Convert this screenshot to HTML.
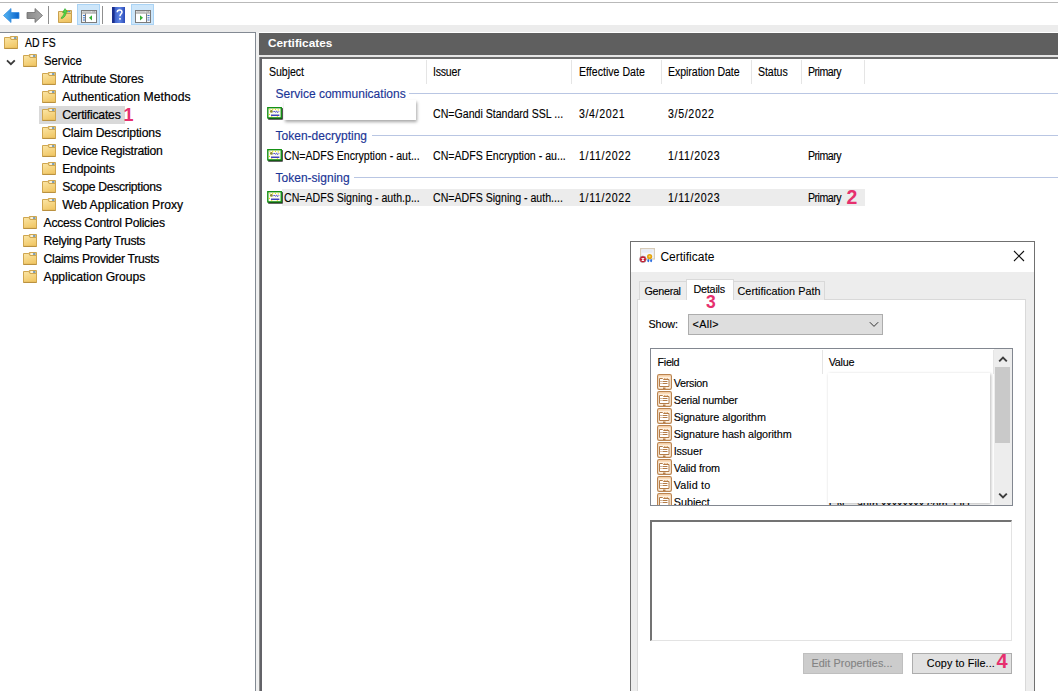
<!DOCTYPE html>
<html><head><meta charset="utf-8">
<style>
*{margin:0;padding:0;box-sizing:border-box}
html,body{width:1058px;height:691px;overflow:hidden;background:#fff;font-family:"Liberation Sans",sans-serif;color:#000}
.a{position:absolute}
.t{position:absolute;white-space:nowrap;line-height:1}
.tree{font-size:12.2px;color:#000;-webkit-text-stroke:.2px #000}
.lv{font-size:12px;color:#000;-webkit-text-stroke:.12px #000;transform:scaleX(.883);transform-origin:0 0}
.grp{font-size:12px;color:#1b3596;-webkit-text-stroke:.15px #1b3596}
.pink{color:#e6306e;font-weight:bold}
.fld{position:absolute;width:14px;height:13px}
.dlg{font-size:10.8px;-webkit-text-stroke:.12px currentColor}
</style></head><body>
<svg width="0" height="0" style="position:absolute">
<defs>
<symbol id="folder" viewBox="0 0 14 13">
 <linearGradient id="fg" x1="0" y1="0" x2=".4" y2="1"><stop offset="0" stop-color="#fbe6a6"/><stop offset="1" stop-color="#f1c868"/></linearGradient>
 <path d="M6.3 .5h7.2v4h-7.2z" fill="#efd184" stroke="#cfa650"/>
 <rect x="7.6" y="1.3" width="2.4" height="1.4" fill="#fff"/><ellipse cx="11.2" cy="2" rx="1.4" ry=".8" fill="#3f88d8"/>
 <path d="M.5 1.5h5.3l1.2 2h6.5v9h-13z" fill="url(#fg)" stroke="#cfa650"/>
 <path d="M.5 12.4h13" stroke="#b48c3c" stroke-width=".9"/>
</symbol>
<symbol id="cert" viewBox="0 0 17 14">
 <rect x="1.2" y="1.2" width="15.6" height="12.4" fill="#111"/>
 <rect x=".75" y=".75" width="14.5" height="11" fill="#fdfdf0" stroke="#169116" stroke-width="1.5"/>
 <circle cx="3" cy="2.8" r=".6" fill="#e8e000"/><circle cx="6" cy="2.6" r=".6" fill="#e8e000"/><circle cx="9" cy="2.6" r=".6" fill="#e8e000"/><circle cx="12" cy="3.2" r=".7" fill="#e8e000"/>
 <circle cx="2.6" cy="8" r=".6" fill="#e8e000"/><circle cx="5" cy="10.3" r=".6" fill="#e8e000"/><circle cx="11" cy="10.3" r=".6" fill="#e8e000"/>
 <circle cx="4.6" cy="4.8" r="1.5" fill="#8c8c30"/>
 <path d="M6.6 5.6l1.2-1.2 1.3 1.3 1.2-1.1 1.3 1.3 1.2-1.2" stroke="#2424c0" stroke-width="1" fill="none"/>
 <rect x="4.2" y="8.2" width="9" height="1.3" fill="#1a1ab4"/>
</symbol>
<symbol id="fieldico" viewBox="0 0 15 16">
 <rect x=".6" y=".6" width="13.8" height="14.8" rx="1.6" fill="#fdf0e0" stroke="#bb8450" stroke-width="1.2"/>
 <rect x="1.5" y="1.5" width="12" height="1" fill="#f9c894"/>
 <path d="M2.5 4.5h3l1 1h5.5v7h-9.5z" fill="#fff" stroke="#b47c48" stroke-width="1"/>
 <rect x="7" y="4" width="1.5" height="1" fill="#e0b080"/><rect x="9.5" y="4" width="1.5" height="1" fill="#e0b080"/>
 <rect x="3.5" y="7" width="1" height="1" fill="#a06a3a"/><rect x="3.5" y="9" width="1" height="1" fill="#c08858"/>
 <path d="M5.5 7.5h5M5.5 9.5h5" stroke="#b47c48" stroke-width="1"/>
 <rect x="6" y="13.5" width="2.5" height="1.5" fill="#b47c48"/>
</symbol>
</defs>
</svg>

<!-- ========== toolbar ========== -->
<div class="a" style="left:0;top:2px;width:1058px;height:1px;background:#b9b9b9"></div>
<div class="a" style="left:0;top:25px;width:1058px;height:7px;background:#ececec"></div>
<!-- back arrow -->
<svg class="a" style="left:3px;top:8px" width="17" height="15" viewBox="0 0 17 15">
 <defs><linearGradient id="gb" x1="0" y1="0" x2="1" y2="0"><stop offset="0" stop-color="#55b8f5"/><stop offset="1" stop-color="#0a62c9"/></linearGradient></defs>
 <path d="M.5 7.5L8 .5v4h8v6H8v4z" fill="url(#gb)" stroke="#3a8fe0" stroke-width=".8" stroke-linejoin="round"/>
</svg>
<!-- forward arrow -->
<svg class="a" style="left:26px;top:8px" width="17" height="15" viewBox="0 0 17 15">
 <defs><linearGradient id="gg" x1="0" y1="0" x2="1" y2="0"><stop offset="0" stop-color="#8a8a8a"/><stop offset="1" stop-color="#a8a8a8"/></linearGradient></defs>
 <path d="M16.5 7.5L9 .5v4H1v6h8v4z" fill="url(#gg)" stroke="#6d6d6d" stroke-width=".8" stroke-linejoin="round"/>
</svg>
<div class="a" style="left:48px;top:6px;width:1px;height:18px;background:#8f8f8f"></div>
<!-- up folder -->
<svg class="a" style="left:58px;top:8px" width="14" height="15" viewBox="0 0 14 15">
 <linearGradient id="ufg" x1="0" y1="0" x2=".3" y2="1"><stop offset="0" stop-color="#fbe3a0"/><stop offset="1" stop-color="#efc463"/></linearGradient>
 <path d="M6 2.5h7.5v3h-7.5z" fill="#efd184" stroke="#c9a04e"/>
 <ellipse cx="11.2" cy="3.6" rx="1.3" ry=".7" fill="#3f88d8"/>
 <path d="M.5 3.5h5.5l1 2h6.5v9h-13z" fill="url(#ufg)" stroke="#c9a04e"/>
 <path d="M3 10.2C4.2 8.2 6 7.2 6.2 4.4L4.6 4.6 7 .6 9.6 4 8.2 4C8.2 7 6.6 9.2 4 10.6z" fill="#55d648" stroke="#2ea12a" stroke-width=".6" stroke-linejoin="round"/>
</svg>
<!-- btn1 -->
<div class="a" style="left:77px;top:4px;width:23px;height:21px;background:#cde6fa;border:1px solid #a9d3f5"></div>
<svg class="a" style="left:81px;top:10px" width="16" height="13" viewBox="0 0 16 13">
 <rect x=".5" y=".5" width="15" height="12" fill="#f2f2f2" stroke="#7b7b7b"/>
 <rect x="1.5" y="1.3" width="9" height="1" fill="#bcbcbc"/>
 <rect x="11.5" y="1.2" width="1" height="1.2" fill="#7b7b7b"/><rect x="13.3" y="1.2" width="1" height="1.2" fill="#7b7b7b"/>
 <path d="M1 3h14" stroke="#8a8a8a" stroke-width=".8"/>
 <path d="M4.5 3.5v9" stroke="#7b7b7b"/>
 <rect x="5" y="4" width="10" height="8" fill="#fff"/>
 <path d="M2 5.5h2M2 7.8h2M2 10h2" stroke="#3b78d4" stroke-width="1"/>
 <path d="M11 5.2v5.3L8 7.85z" fill="#33b033"/>
</svg>
<div class="a" style="left:102px;top:6px;width:1px;height:18px;background:#8f8f8f"></div>
<!-- help -->
<svg class="a" style="left:112px;top:7px" width="13" height="16" viewBox="0 0 13 16">
 <defs><linearGradient id="hg" x1="0" y1="0" x2="1" y2="0"><stop offset="0" stop-color="#2a4cbc"/><stop offset=".6" stop-color="#5d83e2"/><stop offset="1" stop-color="#2a4ab8"/></linearGradient></defs>
 <rect x="0" y="0" width="13" height="16" fill="url(#hg)"/>
 <rect x="0" y="0" width="2.6" height="16" fill="#1b2f8e"/>
 <path d="M5.2 5.3C5.2 3.6 6.2 3 7.6 3S10 3.8 10 5.2 8 7.2 8 9.2" fill="none" stroke="#fff" stroke-width="1.5"/>
 <rect x="7.2" y="11" width="1.6" height="1.7" fill="#fff"/>
</svg>
<!-- btn2 -->
<div class="a" style="left:131px;top:4px;width:23px;height:21px;background:#cde6fa;border:1px solid #a9d3f5"></div>
<svg class="a" style="left:135px;top:10px" width="16" height="13" viewBox="0 0 16 13">
 <rect x=".5" y=".5" width="15" height="12" fill="#f2f2f2" stroke="#7b7b7b"/>
 <rect x="1.5" y="1.3" width="9" height="1" fill="#bcbcbc"/>
 <rect x="11.5" y="1.2" width="1" height="1.2" fill="#7b7b7b"/><rect x="13.3" y="1.2" width="1" height="1.2" fill="#7b7b7b"/>
 <path d="M1 3h14" stroke="#8a8a8a" stroke-width=".8"/>
 <path d="M11.5 3.5v9" stroke="#7b7b7b"/>
 <rect x="1" y="4" width="10" height="8" fill="#fff"/>
 <path d="M12.5 5.5h2M12.5 7.8h2M12.5 10h2" stroke="#3b78d4" stroke-width="1"/>
 <path d="M5 5.2v5.3L8 7.85z" fill="#33b033"/>
</svg>

<!-- ========== left pane ========== -->
<div class="a" style="left:0;top:32px;width:256px;height:1px;background:#838a93"></div>
<div class="a" style="left:255px;top:32px;width:1px;height:659px;background:#838a93"></div>
<div class="a" style="left:256px;top:32px;width:3px;height:659px;background:#f0f0f0"></div>

<svg class="fld" style="left:4px;top:36px"><use href="#folder"/></svg>
<div class="t tree" style="left:24.5px;top:37px;transform:scaleX(.855);transform-origin:0 0">AD FS</div>
<svg class="a" style="left:6px;top:59px" width="10" height="7" viewBox="0 0 10 7"><path d="M1 1.3l3.9 3.9L8.8 1.3" fill="none" stroke="#3a3a3a" stroke-width="1.8"/></svg>
<svg class="fld" style="left:23px;top:54px"><use href="#folder"/></svg>
<div class="t tree" style="left:43.6px;top:55px;transform:scaleX(.93);transform-origin:0 0">Service</div>

<svg class="fld" style="left:42px;top:72px"><use href="#folder"/></svg>
<div class="t tree" style="left:62.2px;top:73px;letter-spacing:-0.165px">Attribute Stores</div>
<svg class="fld" style="left:42px;top:90px"><use href="#folder"/></svg>
<div class="t tree" style="left:62.2px;top:91px;letter-spacing:0.05px">Authentication Methods</div>
<div class="a" style="left:39px;top:106px;width:86px;height:18px;background:#d9d9d9"></div>
<svg class="fld" style="left:42px;top:108px"><use href="#folder"/></svg>
<div class="t tree" style="left:62.2px;top:109px;letter-spacing:-0.22px">Certificates</div>
<div class="t pink" style="left:123.5px;top:106px;font-size:18px">1</div>
<svg class="fld" style="left:42px;top:126px"><use href="#folder"/></svg>
<div class="t tree" style="left:62.2px;top:127px;letter-spacing:-0.164px">Claim Descriptions</div>
<svg class="fld" style="left:42px;top:144px"><use href="#folder"/></svg>
<div class="t tree" style="left:62.2px;top:145px;letter-spacing:-0.288px">Device Registration</div>
<svg class="fld" style="left:42px;top:162px"><use href="#folder"/></svg>
<div class="t tree" style="left:62.2px;top:163px;letter-spacing:-0.195px">Endpoints</div>
<svg class="fld" style="left:42px;top:180px"><use href="#folder"/></svg>
<div class="t tree" style="left:62.2px;top:181px;letter-spacing:-0.318px">Scope Descriptions</div>
<svg class="fld" style="left:42px;top:198px"><use href="#folder"/></svg>
<div class="t tree" style="left:62.2px;top:199px;letter-spacing:-0.042px">Web Application Proxy</div>
<svg class="fld" style="left:23px;top:216px"><use href="#folder"/></svg>
<div class="t tree" style="left:43.6px;top:217px;letter-spacing:-0.271px">Access Control Policies</div>
<svg class="fld" style="left:23px;top:234px"><use href="#folder"/></svg>
<div class="t tree" style="left:43.6px;top:235px;letter-spacing:-0.387px">Relying Party Trusts</div>
<svg class="fld" style="left:23px;top:252px"><use href="#folder"/></svg>
<div class="t tree" style="left:43.6px;top:253px;letter-spacing:-0.324px">Claims Provider Trusts</div>
<svg class="fld" style="left:23px;top:270px"><use href="#folder"/></svg>
<div class="t tree" style="left:43.6px;top:271px;letter-spacing:-0.075px">Application Groups</div>

<!-- ========== right pane ========== -->
<div class="a" style="left:259px;top:33px;width:799px;height:22px;background:#5f5f5f"></div>
<div class="a" style="left:259px;top:55px;width:799px;height:2px;background:#e6e6e6"></div>
<div class="a" style="left:259px;top:57px;width:799px;height:2px;background:#6d6d6d"></div>
<div class="a" style="left:259px;top:57px;width:3px;height:634px;background:#636368;border-left:1px solid #8e8e8e"></div>
<div class="t" style="left:268px;top:38px;font-size:11.8px;font-weight:bold;color:#fff">Certificates</div>

<!-- column headers -->
<div class="t lv" style="left:269.4px;top:66px;letter-spacing:-0.068px">Subject</div>
<div class="t lv" style="left:433.2px;top:66px;letter-spacing:-0.260px">Issuer</div>
<div class="t lv" style="left:578.8px;top:66px">Effective Date</div>
<div class="t lv" style="left:668px;top:66px;letter-spacing:-0.068px">Expiration Date</div>
<div class="t lv" style="left:757.9px;top:66px;letter-spacing:-0.079px">Status</div>
<div class="t lv" style="left:807.8px;top:66px;letter-spacing:-0.555px">Primary</div>
<div class="a" style="left:426px;top:60px;width:1px;height:24px;background:#e5e5e5"></div>
<div class="a" style="left:571px;top:60px;width:1px;height:24px;background:#e5e5e5"></div>
<div class="a" style="left:661px;top:60px;width:1px;height:24px;background:#e5e5e5"></div>
<div class="a" style="left:751px;top:60px;width:1px;height:24px;background:#e5e5e5"></div>
<div class="a" style="left:801px;top:60px;width:1px;height:24px;background:#e5e5e5"></div>
<div class="a" style="left:864px;top:60px;width:1px;height:24px;background:#e5e5e5"></div>

<!-- group 1 -->
<div class="t grp" style="left:275.6px;top:88px">Service communications</div>
<div class="a" style="left:409px;top:93px;width:649px;height:1px;background:#b9c6e3"></div>
<svg class="a" style="left:267px;top:107px" width="16" height="13"><use href="#cert"/></svg>
<div class="a" style="left:284px;top:100px;width:132px;height:20px;background:#fff;box-shadow:1px 2px 3px rgba(0,0,0,.35)"></div>
<div class="t lv" style="left:432.6px;top:108px">CN=Gandi Standard SSL ...</div>
<div class="t lv" style="left:578.8px;top:108px;letter-spacing:0.702px">3/4/2021</div>
<div class="t lv" style="left:668px;top:108px;letter-spacing:0.759px">3/5/2022</div>

<!-- group 2 -->
<div class="t grp" style="left:275.6px;top:130px">Token-decrypting</div>
<div class="a" style="left:372px;top:135px;width:686px;height:1px;background:#b9c6e3"></div>
<svg class="a" style="left:267px;top:149px" width="16" height="13"><use href="#cert"/></svg>
<div class="t lv" style="left:284.4px;top:150px">CN=ADFS Encryption - aut...</div>
<div class="t lv" style="left:433px;top:150px">CN=ADFS Encryption - au...</div>
<div class="t lv" style="left:578.8px;top:150px;letter-spacing:0.759px">1/11/2022</div>
<div class="t lv" style="left:668px;top:150px;letter-spacing:0.759px">1/11/2023</div>
<div class="t lv" style="left:808px;top:150px;letter-spacing:-0.555px">Primary</div>

<!-- group 3 -->
<div class="t grp" style="left:275.6px;top:172px">Token-signing</div>
<div class="a" style="left:354px;top:177px;width:704px;height:1px;background:#b9c6e3"></div>
<div class="a" style="left:282px;top:189px;width:583px;height:17px;background:#ececec"></div>
<svg class="a" style="left:267px;top:191px" width="16" height="13"><use href="#cert"/></svg>
<div class="t lv" style="left:284.4px;top:192px">CN=ADFS Signing - auth.p...</div>
<div class="t lv" style="left:433px;top:192px">CN=ADFS Signing - auth....</div>
<div class="t lv" style="left:578.8px;top:192px;letter-spacing:0.759px">1/11/2022</div>
<div class="t lv" style="left:668px;top:192px;letter-spacing:0.759px">1/11/2023</div>
<div class="t lv" style="left:808px;top:192px;letter-spacing:-0.555px">Primary</div>
<div class="t pink" style="left:846.5px;top:187.5px;font-size:19.5px">2</div>

<!-- ========== dialog ========== -->
<div class="a" style="left:630px;top:241px;width:405px;height:460px;background:#ededed;border:1px solid #707070"></div>
<div class="a" style="left:631px;top:242px;width:403px;height:30px;background:#fff"></div>
<svg class="a" style="left:639px;top:248px" width="16" height="16" viewBox="0 0 16 16">
 <rect x="1.6" y=".6" width="13.8" height="10.4" fill="#f3f5fb" stroke="#d8ccb8" stroke-width="1.2"/>
 <rect x="2.6" y="1.8" width="11" height="3" fill="#e6eaf4"/>
 <ellipse cx="9.3" cy="12.6" rx="1" ry="1.7" fill="#2f6fe0"/><ellipse cx="12.1" cy="12.6" rx="1" ry="1.7" fill="#2f6fe0"/>
 <circle cx="10.6" cy="8.6" r="2.6" fill="#e4a30c"/><circle cx="10.6" cy="8.6" r="1" fill="#fad468"/>
 <circle cx="3.9" cy="11.3" r="3.3" fill="#c8142c" stroke="#a0a0a0" stroke-width=".6"/>
 <path d="M2.7 10.1l2.4 2.4M5.1 10.1l-2.4 2.4" stroke="#fff" stroke-width="1.1"/>
</svg>
<div class="t" style="left:660.4px;top:251px;font-size:12px">Certificate</div>
<svg class="a" style="left:1013px;top:250px" width="12" height="12" viewBox="0 0 12 12"><path d="M1 1l10 10M11 1L1 11" stroke="#111" stroke-width="1.1"/></svg>

<!-- tabs -->
<div class="a" style="left:637px;top:299px;width:389px;height:400px;background:#fff;border:1px solid #d9d9d9"></div>
<div class="a" style="left:639px;top:281px;width:48px;height:19px;background:#ededed;border:1px solid #d9d9d9;border-bottom:none"></div>
<div class="a" style="left:733px;top:281px;width:92px;height:19px;background:#ededed;border:1px solid #d9d9d9;border-bottom:none"></div>
<div class="a" style="left:686px;top:279px;width:48px;height:21px;background:#fff;border:1px solid #d9d9d9;border-bottom:none"></div>
<div class="t dlg" style="left:644.5px;top:286px;letter-spacing:-0.32px">General</div>
<div class="t dlg" style="left:693.4px;top:284px;letter-spacing:-0.2px">Details</div>
<div class="t dlg" style="left:737.5px;top:286px;letter-spacing:0.045px">Certification Path</div>
<div class="t pink" style="left:706px;top:293.5px;font-size:17.5px">3</div>

<div class="t dlg" style="left:648.5px;top:319px;letter-spacing:-0.13px">Show:</div>
<div class="a" style="left:688px;top:314px;width:195px;height:21px;background:#dedede;border:1px solid #adadad"></div>
<div class="t dlg" style="left:692.5px;top:319px;letter-spacing:0.37px">&lt;All&gt;</div>
<svg class="a" style="left:869px;top:321px" width="10" height="7" viewBox="0 0 10 7"><path d="M.8 1.2L5 5.4l4.2-4.2" fill="none" stroke="#333" stroke-width="1"/></svg>

<!-- listview -->
<div class="a" style="left:650px;top:348px;width:363px;height:158px;background:#fff;border:1px solid #828790;overflow:hidden">
 <div class="t dlg" style="left:6.6px;top:8px;letter-spacing:-0.35px">Field</div>
 <div class="t dlg" style="left:177.7px;top:8px;letter-spacing:-0.25px">Value</div>
 <div class="a" style="left:171px;top:1px;width:1px;height:24px;background:#e5e5e5"></div>
 <svg class="a" style="left:6px;top:25px" width="15" height="16"><use href="#fieldico"/></svg>
 <div class="t dlg" style="left:22.7px;top:29px;letter-spacing:-0.29px">Version</div>
 <svg class="a" style="left:6px;top:42px" width="15" height="16"><use href="#fieldico"/></svg>
 <div class="t dlg" style="left:22.7px;top:46px;letter-spacing:-0.25px">Serial number</div>
 <svg class="a" style="left:6px;top:59px" width="15" height="16"><use href="#fieldico"/></svg>
 <div class="t dlg" style="left:22.7px;top:63px;letter-spacing:-0.075px">Signature algorithm</div>
 <svg class="a" style="left:6px;top:76px" width="15" height="16"><use href="#fieldico"/></svg>
 <div class="t dlg" style="left:22.7px;top:80px;letter-spacing:-0.09px">Signature hash algorithm</div>
 <svg class="a" style="left:6px;top:93px" width="15" height="16"><use href="#fieldico"/></svg>
 <div class="t dlg" style="left:22.7px;top:97px;letter-spacing:-0.12px">Issuer</div>
 <svg class="a" style="left:6px;top:110px" width="15" height="16"><use href="#fieldico"/></svg>
 <div class="t dlg" style="left:22.7px;top:114px;letter-spacing:-0.157px">Valid from</div>
 <svg class="a" style="left:6px;top:127px" width="15" height="16"><use href="#fieldico"/></svg>
 <div class="t dlg" style="left:22.7px;top:131px;letter-spacing:0.2px">Valid to</div>
 <svg class="a" style="left:6px;top:144px" width="15" height="16"><use href="#fieldico"/></svg>
 <div class="t dlg" style="left:22.7px;top:148px">Subject</div>
 <div class="t dlg" style="left:178px;top:150px;width:146px;overflow:hidden">CN = auth.xxxxxxxx.com, OU = xxxxxxxx</div>
 <div class="a" style="left:177px;top:24px;width:162px;height:130px;background:#fff;box-shadow:1px 1px 3px rgba(0,0,0,.28)"></div>
 <div class="a" style="left:342px;top:1px;width:1px;height:24px;background:#e5e5e5"></div>
 <div class="a" style="left:343px;top:0;width:19px;height:156px;background:#ededed"></div>
 <svg class="a" style="left:347px;top:6px" width="10" height="8" viewBox="0 0 10 8"><path d="M1.2 6.3L5 2.5l3.8 3.8" fill="none" stroke="#3c3c3c" stroke-width="1.9"/></svg>
 <div class="a" style="left:344px;top:18px;width:15px;height:76px;background:#c9c9c9"></div>
 <svg class="a" style="left:347px;top:143px" width="10" height="8" viewBox="0 0 10 8"><path d="M1.2 1.7L5 5.5l3.8-3.8" fill="none" stroke="#3c3c3c" stroke-width="1.9"/></svg>
</div>

<!-- details text box -->
<div class="a" style="left:650px;top:520px;width:362px;height:121px;background:#fff;border-top:2px solid #737373;border-left:2px solid #737373;border-right:1px solid #e3e3e3;border-bottom:1px solid #e3e3e3"></div>

<!-- buttons -->
<div class="a" style="left:803px;top:653px;width:100px;height:21px;background:#cccccc;border:1px solid #bfbfbf"></div>
<div class="t dlg" style="left:811.5px;top:658px;color:#838383;letter-spacing:0.07px">Edit Properties...</div>
<div class="a" style="left:912px;top:653px;width:100px;height:21px;background:#e1e1e1;border:1px solid #adadad"></div>
<div class="t dlg" style="left:926.8px;top:658px;letter-spacing:0.1px">Copy to File...</div>
<div class="t pink" style="left:996.5px;top:651px;font-size:20px">4</div>
</body></html>
